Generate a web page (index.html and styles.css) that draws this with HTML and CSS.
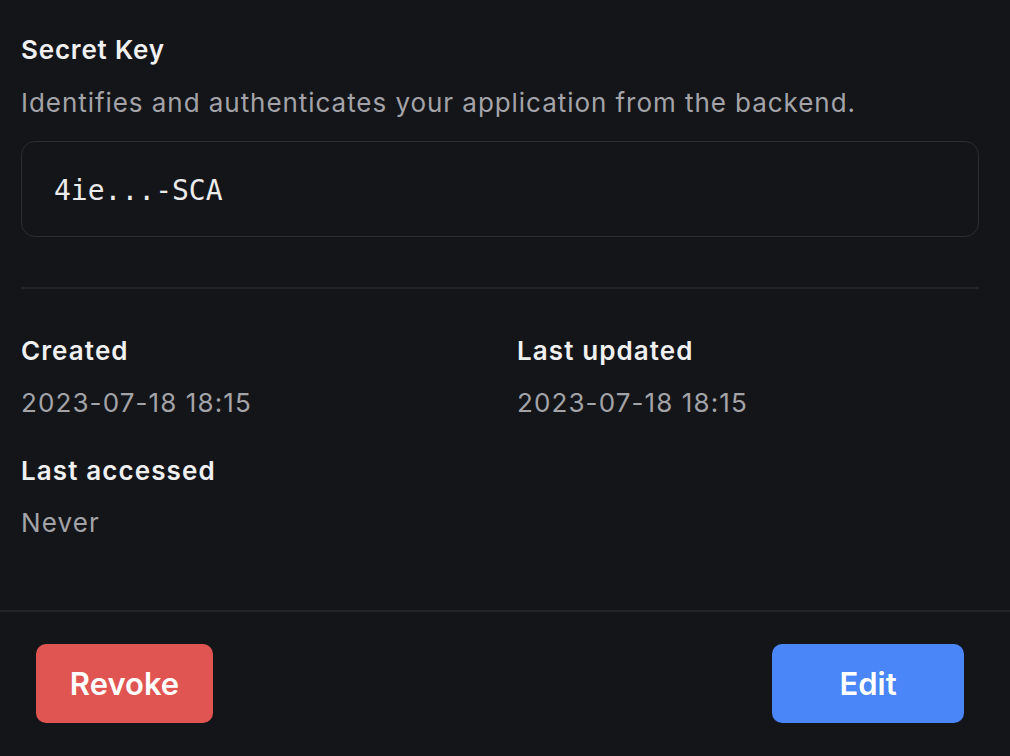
FILE: index.html
```html
<!DOCTYPE html>
<html lang="en">
<head>
<meta charset="utf-8">
<title>Secret Key</title>
<link rel="stylesheet" href="styles.css">
</head>
<body>
<div class="panel">
  <section class="content">
    <h2 class="title">Secret Key</h2>
    <p class="desc">Identifies and authenticates your application from the backend.</p>
    <div class="keybox"><span class="key">4ie...-SCA</span></div>
    <hr class="divider">
    <div class="meta">
      <div class="item">
        <div class="label">Created</div>
        <div class="value">2023-07-18 18:15</div>
      </div>
      <div class="item">
        <div class="label">Last updated</div>
        <div class="value">2023-07-18 18:15</div>
      </div>
      <div class="item">
        <div class="label">Last accessed</div>
        <div class="value">Never</div>
      </div>
    </div>
  </section>
  <footer class="footer">
    <button class="btn btn-danger">Revoke</button>
    <button class="btn btn-primary">Edit</button>
  </footer>
</div>
</body>
</html>
```

FILE: styles.css
```css
html, body {
  margin: 0;
  padding: 0;
  background: #141519;
}
body {
  font-family: Inter, "Noto Sans", sans-serif;
  color: #ededee;
  width: 1010px;
  height: 756px;
  overflow: hidden;
}
.panel {
  display: flex;
  flex-direction: column;
}
.content {
  padding: 32px 31px 0 21px;
  display: flex;
  flex-direction: column;
}
.title {
  margin: 0;
  font-size: 26px;
  line-height: 36px;
  font-weight: 600;
  letter-spacing: 0.8px;
  color: #f0f0f1;
}
.desc {
  margin: 17px 0 0;
  font-size: 26px;
  line-height: 36px;
  font-weight: 400;
  letter-spacing: 0.95px;
  color: #a3a3a8;
}
.keybox {
  margin-top: 20px;
  height: 94px;
  border: 1px solid #2d2e33;
  border-radius: 14px;
  display: flex;
  align-items: center;
  padding-left: 32px;
  background: #141519;
}
.key {
  font-family: "DejaVu Sans Mono", "Liberation Mono", monospace;
  font-size: 28px;
  color: #ececec;
  position: relative;
  top: 1px;
}
.divider {
  margin: 50px 0 0;
  border: 0;
  border-top: 2px solid #232428;
  height: 0;
}
.meta {
  display: grid;
  grid-template-columns: 496px 1fr;
  row-gap: 32px;
  margin-top: 44px;
}
.label {
  font-size: 26px;
  line-height: 36px;
  font-weight: 600;
  letter-spacing: 1.1px;
  color: #f0f0f1;
}
.value {
  margin-top: 16px;
  font-size: 26px;
  line-height: 36px;
  letter-spacing: 1.1px;
  color: #a3a3a8;
}
.footer {
  margin-top: 69px;
  border-top: 2px solid #232428;
  padding: 32px 46px 33px 36px;
  display: flex;
  justify-content: space-between;
  align-items: center;
}
.btn {
  height: 79px;
  border: 0;
  border-radius: 10px;
  font-family: Inter, "Noto Sans", sans-serif;
  font-size: 31px;
  font-weight: 600;
  color: #ffffff;
  padding: 0;
  cursor: pointer;
}
.btn-danger {
  width: 177px;
  background: #e05551;
}
.btn-primary {
  width: 192px;
  background: #4a86f7;
}
```
